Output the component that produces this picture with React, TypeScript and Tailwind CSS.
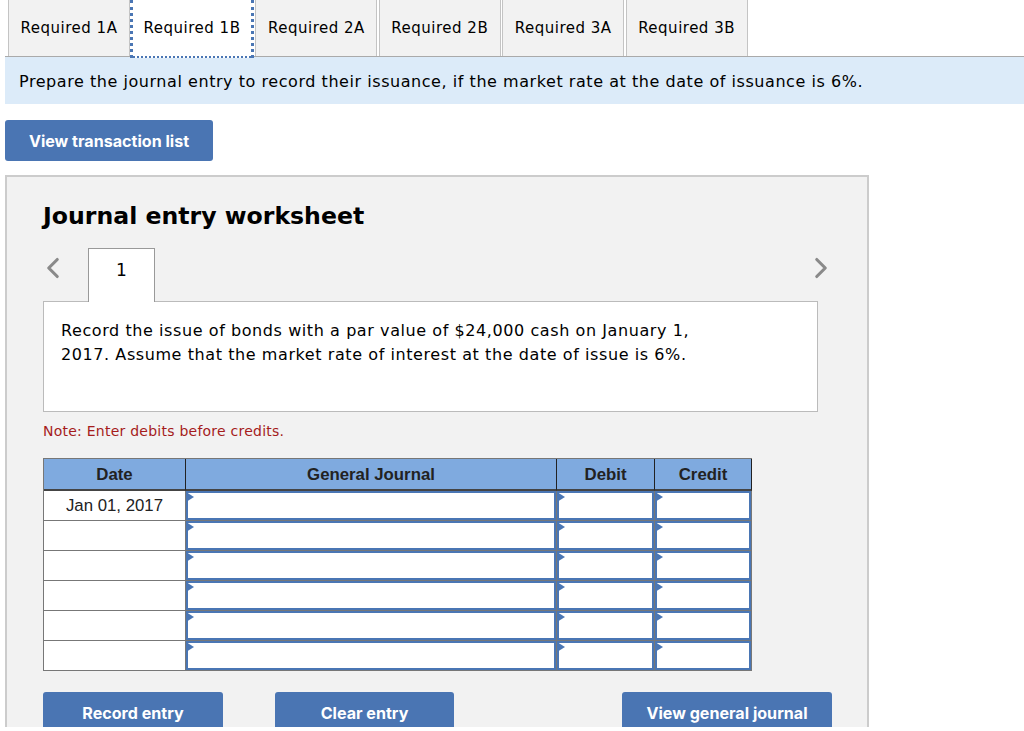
import { ChevronLeft, ChevronRight } from 'lucide-react'

const tabs = ['Required 1A', 'Required 1B', 'Required 2A', 'Required 2B', 'Required 3A', 'Required 3B']
const rows = ['Jan 01, 2017', '', '', '', '', '']

function Cell() {
  return (
    <td className="relative border-r border-b border-[#777] p-0">
      <div className="h-[29px] border-2 border-[#4a76b4] bg-white" />
      <span className="absolute top-[1px] left-0 h-0 w-0 border-y-[5px] border-l-[8px] border-y-transparent border-l-[#4a76b4]" />
    </td>
  )
}

function ActionButton({ label, className }: { label: string; className: string }) {
  return (
    <button type="button" className={`h-[41px] shrink-0 rounded-t-[3px] bg-[#4a75b3] pt-[2px] text-[16.1px] font-bold text-white ${className}`}>
      {label}
    </button>
  )
}

export default function App() {
  return (
    <div className="h-[731px] w-[1024px] overflow-hidden bg-white font-['DejaVu_Sans',sans-serif] text-black">
      <div className="ml-[5px] flex h-[57px] items-stretch border-b border-[#aaa] pl-[3px]">
        {tabs.map((tab, i) => (
          <div
            key={tab}
            className={
              i === 1
                ? 'flex h-[58px] w-[124px] items-center justify-center border-x-[3px] border-b-2 border-dotted border-[#4a76b4] bg-white text-[15px] tracking-[0.5px]'
                : 'flex w-[122px] items-center justify-center border-x border-[#c4c4c4] bg-[#f2f2f2] text-[15px] tracking-[0.5px] [&:not(:first-child)]:ml-[1.4px]'
            }
          >
            {tab}
          </div>
        ))}
      </div>

      <div className="ml-[5px] flex h-[47px] items-center bg-[#dcebf9] pt-[3px] pl-[14px] text-base tracking-[0.55px]">
        Prepare the journal entry to record their issuance, if the market rate at the date of issuance is 6%.
      </div>

      <button
        type="button"
        className="mt-[16px] ml-[5px] block h-[41px] w-[208px] rounded-[3px] bg-[#4a75b3] pt-[2px] font-['Inter',sans-serif] text-[16.1px] font-bold text-white"
      >
        View transaction list
      </button>

      <section className="mt-[14px] ml-[5px] h-[552px] w-[864px] overflow-hidden border-x-2 border-t-2 border-[#ccc] bg-[#f2f2f2] pt-[24px] pl-[36px]">
        <h2 className="text-[23.6px] leading-[30px] font-bold">Journal entry worksheet</h2>

        <div className="mt-[17px] flex h-[54px] w-[775px] items-start">
          <ChevronLeft className="mt-[3px] h-[34px] w-[34px] -translate-x-[7px] text-[#8a8a8a]" strokeWidth={2.2} />
          <div className="relative z-10 ml-[11px] flex h-[54px] w-[67px] items-center justify-center border-x border-t border-[#999] bg-white pb-[9px] text-[17px]">
            1
          </div>
          <ChevronRight className="mt-[3px] ml-auto h-[34px] w-[34px] translate-x-[20px] text-[#8a8a8a]" strokeWidth={2.2} />
        </div>

        <div className="-mt-px h-[111px] w-[775px] border border-[#bbb] bg-white px-[17px] pt-[17px] text-base leading-[24px] tracking-[0.58px]">
          Record the issue of bonds with a par value of $24,000 cash on January 1,
          <br />
          2017. Assume that the market rate of interest at the date of issue is 6%.
        </div>

        <p className="mt-[10px] text-sm leading-[18px] tracking-[0.24px] text-[#a51c1c]">Note: Enter debits before credits.</p>

        <table className="mt-[18px] w-[708px] table-fixed border-separate border-spacing-0 border-t border-l border-[#777] font-['Liberation_Sans',sans-serif] text-[16.8px]">
          <thead>
            <tr className="h-[32px] bg-[#7faadf] font-bold text-[#222]">
              <th className="w-[142px] border-r border-b-2 border-r-[#222] border-b-[#444] pt-[2px]">Date</th>
              <th className="w-[371px] border-r border-b-2 border-r-[#222] border-b-[#444] pt-[2px]">General Journal</th>
              <th className="w-[98px] border-r border-b-2 border-r-[#222] border-b-[#444] pt-[2px]">Debit</th>
              <th className="w-[97px] border-r border-b-2 border-r-[#222] border-b-[#444] pt-[2px]">Credit</th>
            </tr>
          </thead>
          <tbody>
            {rows.map((date, i) => (
              <tr key={i} className="h-[30px]">
                <td className="border-r border-b border-[#777] bg-white text-center text-[#222]">{date}</td>
                <Cell />
                <Cell />
                <Cell />
              </tr>
            ))}
          </tbody>
        </table>

        <div className="mt-[21px] flex w-[789px] font-['Inter',sans-serif]">
          <ActionButton label="Record entry" className="w-[180px]" />
          <ActionButton label="Clear entry" className="ml-[52px] w-[179px]" />
          <ActionButton label="View general journal" className="ml-auto w-[210px]" />
        </div>
      </section>
    </div>
  )
}
